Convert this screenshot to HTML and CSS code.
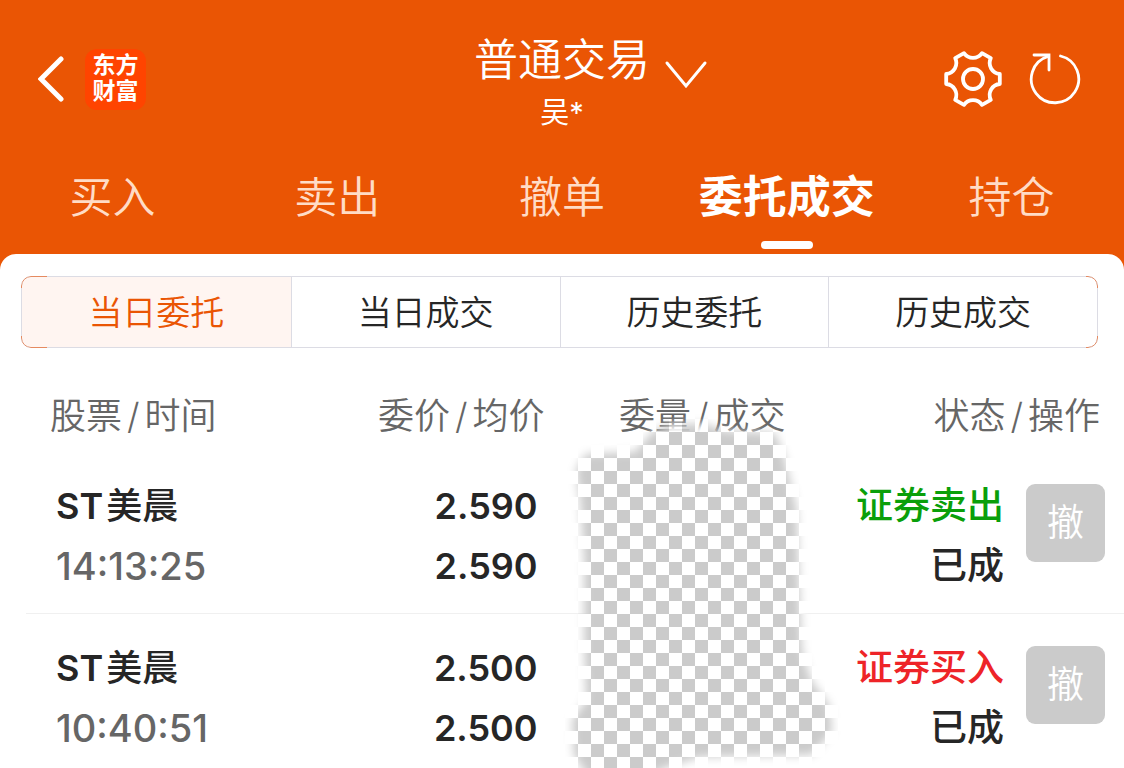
FILE: index.html
```html
<!DOCTYPE html>
<html lang="zh-CN">
<head>
    <meta charset="UTF-8">
    <meta name="viewport" content="width=device-width, initial-scale=1.0">
    <title>普通交易</title>
    <link rel="stylesheet" href="styles.css">
</head>
<body>
    <header class="header">
        <div class="topbar">
            <div class="topbar-left">
                <button class="icon-button" aria-label="返回">
                    <svg width="28" height="50" viewBox="2 0 28 50" fill="none" stroke="currentColor" stroke-width="5" stroke-linecap="round">
                        <path d="M25 5 5 25 25 45"/>
                    </svg>
                </button>
                <div class="logo">东方<br>财富</div>
            </div>
            <div class="account">
                <button class="account-switch">普通交易
                    <svg class="chevron" width="44" height="30" viewBox="0 0 44 30" fill="none" stroke="currentColor" stroke-width="3" stroke-linecap="round">
                        <path d="M3 3 22 26 41 3"/>
                    </svg>
                </button>
                <div class="account-name">吴*</div>
            </div>
            <div class="topbar-right">
                <button class="icon-button" aria-label="设置">
                    <svg width="60" height="60" viewBox="-30 -30 60 60" fill="none" stroke="currentColor" stroke-width="3.8" stroke-linejoin="round">
                        <path d="M26.8 -5V5A11 11 0 0 0 17.8 20.8L9 25.8A11 11 0 0 0 -9 25.8L-17.8 20.8A11 11 0 0 0 -26.8 5V-5A11 11 0 0 0 -17.8 -20.8L-9 -25.8A11 11 0 0 0 9 -25.8L17.8 -20.8A11 11 0 0 0 26.8 -5Z"/>
                        <circle r="10"/>
                    </svg>
                </button>
                <button class="icon-button" aria-label="刷新">
                    <svg width="58" height="54" viewBox="-27 -27 58 54" fill="none" stroke="currentColor" stroke-width="2.8" stroke-linecap="round">
                        <path d="M5.5 -23A23.7 23.7 0 1 1 -7 -22.6"/>
                        <path d="M-21 -24H-6V-9"/>
                    </svg>
                </button>
            </div>
        </div>
        <nav class="tabs">
            <a class="tab" href="#">买入</a>
            <a class="tab" href="#">卖出</a>
            <a class="tab" href="#">撤单</a>
            <a class="tab active" href="#">委托成交</a>
            <a class="tab" href="#">持仓</a>
        </nav>
    </header>

    <main class="panel">
        <div class="segments">
            <button class="segment active">当日委托</button>
            <button class="segment">当日成交</button>
            <button class="segment">历史委托</button>
            <button class="segment">历史成交</button>
        </div>

        <div class="orders">
            <table class="orders-table">
                <thead>
                    <tr>
                        <th class="col-stock">股票<span class="slash">/</span>时间</th>
                        <th class="col-price">委价<span class="slash">/</span>均价</th>
                        <th class="col-amount">委量<span class="slash">/</span>成交</th>
                        <th class="col-status">状态<span class="slash">/</span>操作</th>
                    </tr>
                </thead>
                <tbody>
                    <tr>
                        <td class="col-stock">ST<span class="stock-name">美晨</span><div class="time">14:13:25</div></td>
                        <td class="col-price">2.590<div>2.590</div></td>
                        <td class="col-amount"></td>
                        <td class="col-status">
                            <div class="status">
                                <div><div class="sell">证券卖出</div><div>已成</div></div>
                                <button class="cancel" disabled>撤</button>
                            </div>
                        </td>
                    </tr>
                    <tr>
                        <td class="col-stock">ST<span class="stock-name">美晨</span><div class="time">10:40:51</div></td>
                        <td class="col-price">2.500<div>2.500</div></td>
                        <td class="col-amount"></td>
                        <td class="col-status">
                            <div class="status">
                                <div><div class="buy">证券买入</div><div>已成</div></div>
                                <button class="cancel" disabled>撤</button>
                            </div>
                        </td>
                    </tr>
                </tbody>
            </table>

            <!-- erased amounts -->
            <svg class="eraser" width="320" height="388" viewBox="540 380 320 388" aria-hidden="true">
                <defs>
                    <pattern id="checker" x="578" y="432" width="26" height="26" patternUnits="userSpaceOnUse">
                        <rect width="26" height="26" fill="#fff"/>
                        <path d="M13 0h13v13h-13zM0 13h13v13h-13z" fill="#cbcbcb"/>
                    </pattern>
                    <filter id="soft" x="-20%" y="-20%" width="140%" height="140%">
                        <feGaussianBlur stdDeviation="5"/>
                    </filter>
                    <mask id="brush" maskUnits="userSpaceOnUse" x="540" y="380" width="320" height="388">
                        <path filter="url(#soft)" fill="#fff" d="M586 454 635 452 650 434 668 424 705 424 725 431 775 433 784 455 790 480 797 510 800 600 802 650 811 680 830 706 832 732 812 755 760 756 700 757 665 768 640 780 590 780 574 755 572 720 586 700 584 640 584 560 580 500 576 470Z"/>
                    </mask>
                </defs>
                <rect x="540" y="380" width="320" height="388" fill="url(#checker)" mask="url(#brush)"/>
            </svg>
        </div>
    </main>
</body>
</html>
```
FILE: styles.css
```css
:root {
    --primary-color: #ea5504;
    --text-color: #262626;
    --muted-color: #666;
    --line-color: #dcdce4;
}

* {
    box-sizing: border-box;
}

body {
    margin: 0;
    background: #fff;
    color: var(--text-color);
    font-family: Inter, "Noto Sans CJK SC", sans-serif;
}

button {
    margin: 0;
    padding: 0;
    border: none;
    background: none;
    color: inherit;
    font: inherit;
    cursor: pointer;
}

svg {
    display: block;
}

/* header */
.header {
    background: var(--primary-color);
    color: #fff;
    padding-top: 28px;
    padding-bottom: 36px;
}

.topbar {
    display: grid;
    grid-template-columns: 1fr auto 1fr;
    padding: 0 38px;
}

.topbar-left,
.topbar-right {
    display: flex;
    align-items: center;
    height: 102px;
}

.topbar-left {
    gap: 19px;
}

.topbar-right {
    justify-content: flex-end;
    gap: 25px;
}

.logo {
    width: 61px;
    height: 61px;
    padding-top: 3px;
    border-radius: 12px;
    background: #ff4400;
    font-family: "Liberation Sans", "Noto Sans CJK SC", sans-serif;
    font-size: 23px;
    font-weight: 700;
    line-height: 26px;
    text-align: center;
}

.account {
    padding-top: 2px;
    text-align: center;
}

.account-switch {
    position: relative;
    font-size: 44px;
    font-weight: 350;
    line-height: 60px;
}

.chevron {
    position: absolute;
    left: 100%;
    top: 30px;
    margin-left: 14px;
}

.account-name {
    font-size: 29px;
    line-height: 46px;
}

.tabs {
    display: grid;
    grid-template-columns: repeat(5, 1fr);
    padding-top: 31px;
}

.tab {
    position: relative;
    height: 67px;
    color: #ffdcc6;
    font-size: 43px;
    font-weight: 350;
    line-height: 60px;
    text-align: center;
    text-decoration: none;
    white-space: nowrap;
}

.tab.active {
    color: #fff;
    font-size: 44px;
    font-weight: 700;
}

.tab.active::after {
    content: "";
    position: absolute;
    left: 50%;
    top: 74px;
    width: 52px;
    height: 8px;
    margin-left: -26px;
    border-radius: 4px;
    background: #fff;
}

/* panel overlaps the header so its rounded corners show */
.panel {
    position: relative;
    margin-top: -16px;
    padding-top: 22px;
    border-radius: 16px 16px 0 0;
    background: #fff;
}

.segments {
    position: relative;
    display: grid;
    grid-template-columns: repeat(4, 1fr);
    height: 72px;
    margin: 0 26px 0 21px;
    border: 1px solid var(--line-color);
    border-radius: 10px;
}

/* tinted corners over the grey frame */
.segments::before {
    content: "";
    position: absolute;
    inset: -1px;
    border: 1px solid #e58a60;
    border-radius: 10px;
    pointer-events: none;
    -webkit-mask: linear-gradient(#000 12px, transparent 12px calc(100% - 12px), #000 0);
    mask: linear-gradient(#000 12px, transparent 12px calc(100% - 12px), #000 0);
    clip-path: polygon(0 0, 26px 0, 26px 100%, calc(100% - 12px) 100%, calc(100% - 12px) 0, 100% 0, 100% 100%, 0 100%);
}

.segment {
    padding-top: 2px;
    font-size: 34px;
    font-weight: 350;
    line-height: 68px;
}

.segment + .segment {
    border-left: 1px solid var(--line-color);
}

.segment.active {
    border-radius: 9px 0 0 9px;
    background: #fff5f1;
    color: var(--primary-color);
}

/* orders */
.orders {
    position: relative;
    padding-left: 26px;
    overflow: hidden;
}

.orders-table {
    width: 100%;
    table-layout: fixed;
    border-collapse: collapse;
    font-size: 37px;
    line-height: 60px;
}

th {
    padding: 49px 0 17px;
    color: var(--muted-color);
    font-size: 36px;
    font-weight: 350;
    line-height: 38px;
    white-space: nowrap;
}

td {
    padding: 24px 0 17px;
    font-weight: 600;
    vertical-align: top;
    white-space: nowrap;
}

tbody tr + tr td {
    border-top: 1px solid #f0f0f0;
}

tbody tr:last-child td {
    padding-bottom: 10px;
}

.slash {
    margin: 0 5px;
}

.col-stock {
    width: 27.7%;
    padding-left: 30px;
    text-align: left;
}

td.col-stock {
    font-size: 36px;
}

th.col-stock {
    padding-left: 24px;
}

.col-price {
    width: 20.9%;
    padding-right: 22px;
    font-size: 36px;
    text-align: right;
}

th.col-price {
    padding-right: 15px;
}

.col-amount {
    width: 26%;
    text-align: center;
}

.col-status {
    padding-right: 19px;
    text-align: right;
}

th.col-status {
    padding-right: 24px;
}

.stock-name {
    margin-left: 3px;
    font-weight: 500;
}

.time {
    color: var(--muted-color);
    font-size: 38px;
    font-weight: 500;
}

.status {
    display: flex;
    justify-content: flex-end;
    gap: 22px;
    font-weight: 500;
}

.sell {
    color: #0a9f0a;
}

.buy {
    color: #ee2428;
}

.cancel {
    width: 79px;
    height: 78px;
    margin-top: 8px;
    border-radius: 9px;
    background: #cbcbcb;
    color: #fff;
    font-weight: 350;
    cursor: default;
}

.eraser {
    position: absolute;
    left: calc(50% - 22px);
    top: 32px;
    pointer-events: none;
}
```
